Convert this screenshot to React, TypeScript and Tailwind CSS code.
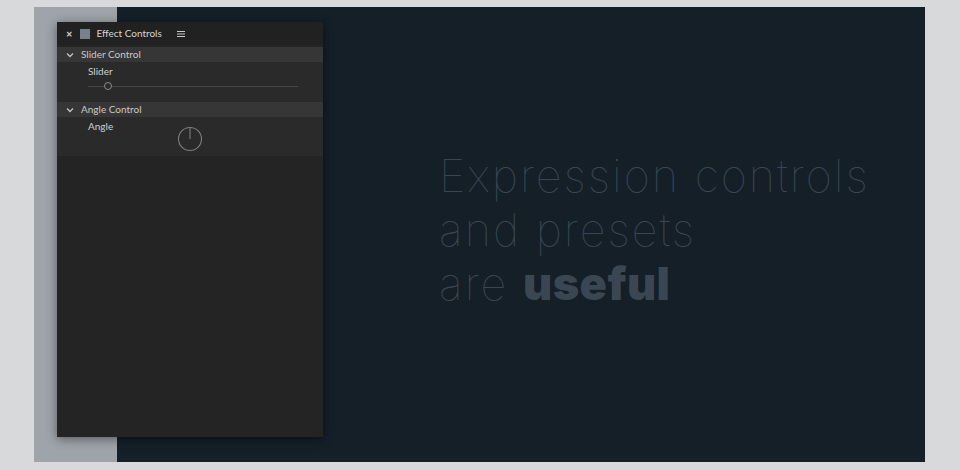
import React from "react";

const panelFont = { fontFamily: "Lato, 'Open Sans', sans-serif" };
const titleFont = { fontFamily: "Inter, 'Noto Sans', sans-serif" };

function Chevron() {
  return (
    <svg width="8" height="6" viewBox="0 0 8 6" className="shrink-0">
      <path d="M1 1.5 L4 4.5 L7 1.5" fill="none" stroke="#c4c4c4" strokeWidth="1.3" />
    </svg>
  );
}

function SectionHeader({ title }: { title: string }) {
  return (
    <div className="flex h-[15px] items-center gap-[7px] bg-[#363636] pl-[9px] text-[10px] text-[#c9c9c9]">
      <Chevron />
      <span>{title}</span>
    </div>
  );
}

function EffectControls() {
  return (
    <div
      className="absolute left-[23px] top-[15px] flex h-[415px] w-[266px] flex-col bg-[#242424] shadow-[0_2px_10px_rgba(0,0,0,0.45)]"
      style={panelFont}
    >
      {/* header */}
      <div className="flex h-[23px] items-center bg-[#212121] pl-[9px] text-[10px] text-[#d4d4d4]">
        <span className="text-[11px] font-bold leading-none">×</span>
        <span className="ml-[8px] h-[10px] w-[10px] bg-[#76828a]" />
        <span className="ml-[6px]">Effect Controls</span>
        <svg width="8" height="8" viewBox="0 0 8 8" className="ml-[15px]">
          <path d="M0 1.5H8M0 4H8M0 6.5H8" stroke="#c8c8c8" strokeWidth="1.1" />
        </svg>
      </div>

      <div className="h-[2px]" />
      <SectionHeader title="Slider Control" />
      <div className="h-[38px] bg-[#2a2a2a] pl-[31px] pr-[25px] pt-[3px] text-[10px] text-[#cfcfcf]">
        <div className="leading-[12px]">Slider</div>
        <div className="relative mt-[5px] h-[8px]">
          <div className="absolute left-0 right-0 top-[3.5px] h-px bg-[#474747]" />
          <div className="absolute left-[16px] top-0 h-[8px] w-[8px] rounded-full border border-[#8a8a8a] bg-[#2a2a2a]" />
        </div>
      </div>
      <div className="h-[2px] bg-[#2a2a2a]" />
      <SectionHeader title="Angle Control" />
      <div className="relative h-[39px] bg-[#2a2a2a] pl-[31px] pt-[3px] text-[10px] text-[#cfcfcf]">
        <div className="leading-[12px]">Angle</div>
        <svg width="26" height="26" viewBox="0 0 26 26" className="absolute left-[120px] top-[9px]">
          <circle cx="13" cy="13" r="11.5" fill="none" stroke="#7d7d7d" strokeWidth="1.1" />
          <path d="M13 1.5V13" stroke="#7d7d7d" strokeWidth="1.1" />
        </svg>
      </div>
      <div className="flex-1 bg-[#242424]" />
    </div>
  );
}

export default function App() {
  return (
    <div className="h-[470px] w-[960px] bg-[#d8d9db] pl-[34px] pr-[35px] pt-[7px] pb-[8px]">
      <div className="relative flex h-[455px] w-full">
        <div className="w-[83px] bg-[#9ea4a9]" />
        <div className="flex flex-1 items-start bg-[#141f28] pl-[322px] pt-[142px]">
          <div
            className="text-[45px] leading-[54px] font-thin tracking-[2px] text-[#3a4752]"
            style={titleFont}
          >
            <div>Expression controls</div>
            <div>and presets</div>
            <div>
              are <span className="font-black tracking-[0.5px] text-[#3a4753]">useful</span>
            </div>
          </div>
        </div>
        <EffectControls />
      </div>
    </div>
  );
}
